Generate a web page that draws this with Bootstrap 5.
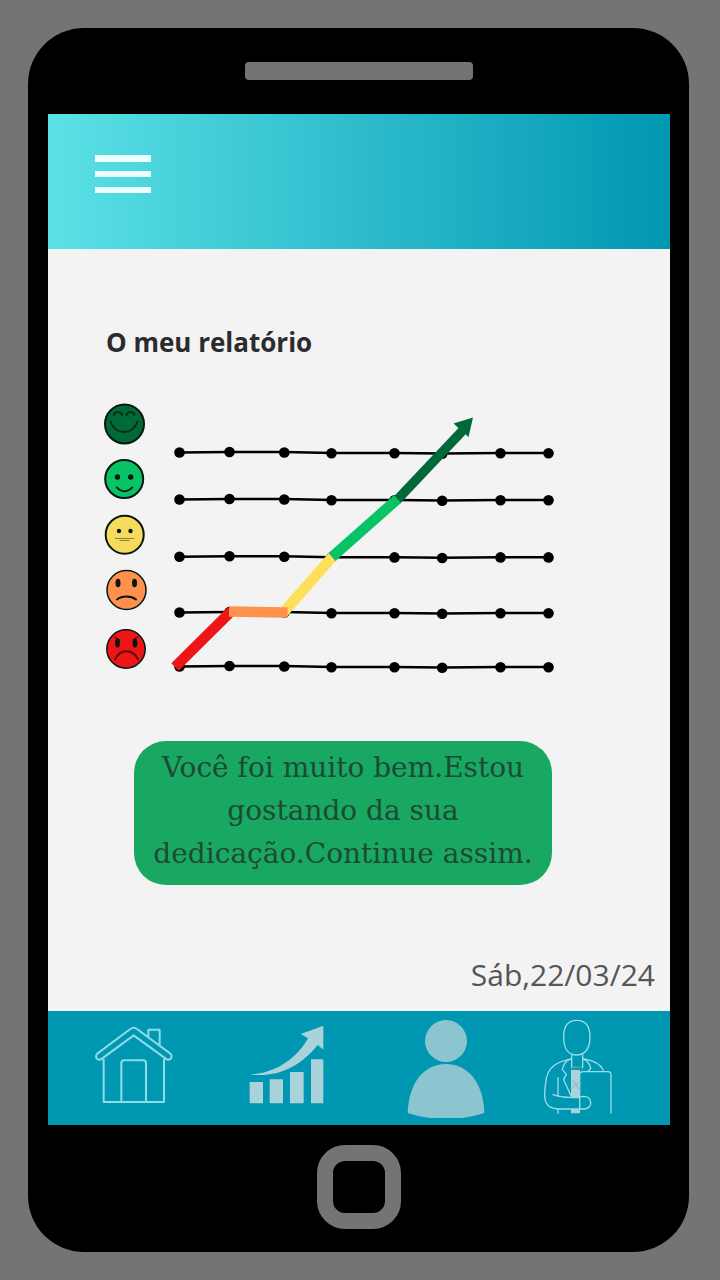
<!DOCTYPE html>
<html lang="pt">
<head>
<meta charset="utf-8">
<meta name="viewport" content="width=device-width, initial-scale=1">
<title>O meu relatório</title>
<link href="https://cdn.jsdelivr.net/npm/bootstrap@5.3.0/dist/css/bootstrap.min.css" rel="stylesheet">
<style>
  body { background: #747474; font-family: "Open Sans", "Noto Sans", sans-serif; padding: 28px 31px 28px 28px; }
  .phone { background: #000; border-radius: 56px; min-height: calc(100vh - 56px); padding: 0 19px 0 20px; }
  .bezel-top { height: 86px; }
  .speaker { width: 228px; height: 18px; border-radius: 4px; background: #747474; }
  .bezel-bottom { height: 127px; padding-bottom: 4px; }
  .home-key { width: 84px; height: 84px; border: 16px solid #747474; border-radius: 28px; background: #000; }
  .app-screen { background: #f3f3f3; }
  .top-bar { height: 135px; padding: 40px 46px; background: linear-gradient(90deg, #5ce1e6, #0097b2); }
  .menu-btn { width: 58px; line-height: 0; }
  .report { padding: 75px 0 16px; }
  .report h1 { font-size: 26px; line-height: 36px; font-weight: 700; color: #2b2b2e; margin: 0 58px 40px; }
  .chart-box { padding: 0 110px 0 52px; }
  .feedback { margin: 67px 118px 0 86px; padding: 5px 8px 10px; min-height: 144px; border-radius: 32px; background: #19a862; color: #1d4a35;
    font-family: "DejaVu Serif", serif; font-size: 28px; line-height: 43px; }
  .report-date { font-size: 30px; line-height: 40px; color: #555; padding-right: 15px; }
  .tab-bar { display: grid; grid-template-columns: 153fr 159fr 132fr 80fr; padding: 7px 52px 7px 46px; background: #0097b2; }
  .tab-bar svg { width: 80px; height: 100px; }
</style>
</head>
<body>
<div class="phone d-flex flex-column">
  <div class="bezel-top d-flex justify-content-center align-items-center"><div class="speaker"></div></div>

  <div class="app-screen flex-grow-1 d-flex flex-column">
    <header class="top-bar">
      <button type="button" class="menu-btn btn border-0 p-0" aria-label="Menu">
        <svg width="58" height="40" viewBox="0 0 58 40" fill="#ecffff"><path d="M1 1h56v7H1zM1 17h56v6H1zM1 33h56v6H1z"/></svg>
      </button>
    </header>

    <main class="report flex-grow-1 d-flex flex-column">
      <h1>O meu relatório</h1>
      <div class="chart-box">
        <svg class="d-block w-100" viewBox="100 400 460 274" role="img" aria-label="Evolução do humor">
          <g stroke="#07170e" stroke-width="2" stroke-linecap="round" fill="none">
            <circle cx="124.500" cy="424" r="19.500" fill="#006938"/>
            <path d="M110.500 421.500C116 435.500 132 435.500 137.500 421.500M114 415c1-4 7-4 8 0M126.500 415c1-4 7-4 8 0" stroke="#032f19"/>
            <circle cx="124.200" cy="479" r="19" fill="#08c366"/>
            <path d="M117 487.500c4 5 11 5 15 0"/>
            <circle cx="124.700" cy="534.700" r="19" fill="#f6db5d"/>
            <path d="M115.500 538.500h18M120 540.500h9" stroke="#887b3f" stroke-width="1"/>
            <circle cx="126.500" cy="590" r="19.500" fill="#ff914d" stroke-width="1.500"/>
            <path d="M117 599.500c5-4 14-4 19 0"/>
            <circle cx="126" cy="649" r="19.200" fill="#ed1515" stroke-width="1.500"/>
            <path d="M115 659.500c5-11 18-11 23 0" stroke="#5a0c08"/>
            <path d="M114.500 637l5 3M138 637l-5 3" stroke-width="1"/>
          </g>
          <g fill="#07170e">
            <circle cx="117.500" cy="477" r="2.700"/><circle cx="130.700" cy="477" r="2.700"/>
            <circle cx="119" cy="531" r="2.200"/><circle cx="130.500" cy="531" r="2.200"/>
            <ellipse cx="118" cy="583" rx="2.500" ry="4.300"/><ellipse cx="134.500" cy="583" rx="2.500" ry="4.300"/>
            <ellipse cx="117.500" cy="643" rx="2.400" ry="4.500"/><ellipse cx="135" cy="643" rx="2.400" ry="4.500"/>
          </g>
          <defs>
            <g id="scale-row">
              <path d="M179.500 .5L229.500 0H284.500L331.500 1H394.500L442 1.500L500.500 1H548.500" fill="none" stroke="#000" stroke-width="2.500"/>
              <circle cx="179.500" cy=".5" r="5.300"/><circle cx="229.500" cy="0" r="5.300"/><circle cx="284.300" cy=".5" r="5.300"/><circle cx="331.500" cy="1.200" r="5.300"/>
              <circle cx="394.500" cy="1.200" r="5.300"/><circle cx="442.200" cy="1.800" r="5.300"/><circle cx="500.500" cy="1.200" r="5.300"/><circle cx="548.500" cy="1.200" r="5.300"/>
            </g>
          </defs>
          <use href="#scale-row" y="452"/><use href="#scale-row" y="499"/><use href="#scale-row" y="556.200"/><use href="#scale-row" y="612"/><use href="#scale-row" y="666"/>
          <g fill="none" stroke-width="10.500">
            <path d="M175 667L231.500 611" stroke="#ed1515"/>
            <path d="M283 613L333 556" stroke="#ffde59"/>
            <path d="M229 611.500L287.500 612.500" stroke="#ff914d"/>
            <path d="M397 500L466 427" stroke="#006938" stroke-width="9.500"/>
            <path d="M332 557L397.500 499" stroke="#08c366"/>
          </g>
          <path d="M473 417.500L453.500 423.500L468.500 437z" fill="#006938"/>
        </svg>
      </div>
      <p class="feedback text-center">Você foi muito bem.Estou gostando da sua dedicação.Continue assim.</p>
      <div class="report-date text-end mt-auto">Sáb,22/03/24</div>
    </main>

    <nav class="tab-bar">
      <a href="#" aria-label="Início">
        <svg viewBox="42 39 240 300" fill="none" stroke="#8fdbe6" stroke-width="6" stroke-linejoin="round">
          <path d="M71 162V291H252V162M124 291V174q0-8 8-8h58q8 0 8 8V291"/>
          <path d="M52 146L151 72q10-8 20 0L271 146q7 8 1 15q-7 6-15 0L161 91L66 161q-8 6-15 0q-6-7 1-15zM205 96V74H239V120"/>
        </svg>
      </a>
      <a href="#" aria-label="Relatório">
        <svg viewBox="501 39 240 300" fill="#a9d2da">
          <path d="M509 231h40v64h-40zM569 223h40v72h-40zM630 201h41v94h-41zM693 163h37v132h-37z"/>
          <path d="M730 62V134L713 120C665 180 600 218 512 209C590 203 650 160 684 100L662 87z"/>
        </svg>
      </a>
      <a href="#" aria-label="Perfil">
        <svg viewBox="48 39 240 300" fill="#8bc5d0">
          <circle cx="168" cy="108" r="63"/>
          <path d="M53 324C56 235 100 177 168 177S280 235 283 324Q230 342 168 342T53 324z"/>
        </svg>
      </a>
      <a href="#" aria-label="Médico">
        <svg viewBox="9 9 240 300" fill="none" stroke="#9adde7" stroke-width="4" stroke-linejoin="round" stroke-linecap="round">
          <path d="M108 165H135V250H108zM108 283h27v12h-27z" fill="#a9d2da" stroke="none"/>
          <path d="M125 16C99 16 86 35 86 66C86 100 100 120 125 120S165 100 165 66C165 35 152 16 125 16z"/>
          <path d="M110 119V158M143 119V158M110 130C92 136 84 152 82 164L94 178L86 194L108 242M143 130C158 138 166 148 167 160L160 168"/>
          <path d="M106 133C60 140 40 160 34 190C30 215 28 240 30 252C34 275 50 282 80 282H148C162 281 168 272 167 262C166 250 160 244 145 244C120 248 90 252 54 239M69 188V244M69 284V295"/>
          <path d="M147 132C180 137 198 150 205 166M134 282V180Q134 170 144 170H218Q228 170 228 180V294"/>
          <path d="M110 164V156l6 5V153l6 8v-8l6 8v-8l6 8v-6l7 1v8M114 197L132 222M132 200L112 220" stroke="#789fa8" stroke-width="2"/>
        </svg>
      </a>
    </nav>
  </div>

  <div class="bezel-bottom d-flex justify-content-center align-items-center"><button type="button" class="home-key p-0" aria-label="Tecla inicial"></button></div>
</div>
<script src="https://cdn.jsdelivr.net/npm/bootstrap@5.3.0/dist/js/bootstrap.bundle.min.js"></script>
</body>
</html>
